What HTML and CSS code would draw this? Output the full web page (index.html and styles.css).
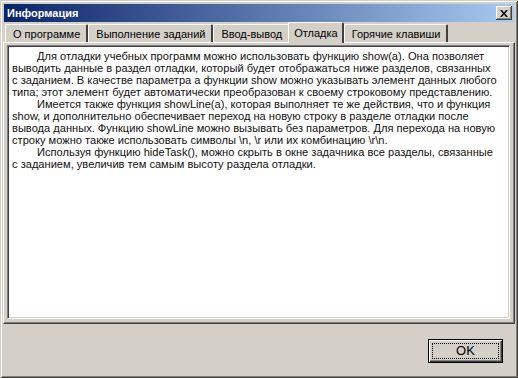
FILE: index.html
```html
<!DOCTYPE html>
<html lang="ru">
<head>
  <meta charset="UTF-8">
  <title>Информация</title>
  <link rel="stylesheet" href="styles.css">
</head>
<body>

  <div class="window">
    <!-- заголовок окна -->
    <div class="titlebar">
      <span class="title">Информация</span>
      <button class="close-btn">
        <svg width="8" height="7" viewBox="0 0 8 7">
          <path d="M0 0h2l2 2.5L6 0h2L5 3.5 8 7H6L4 4.5 2 7H0l3-3.5z" fill="#000"/>
        </svg>
      </button>
    </div>

    <!-- вкладки -->
    <div class="tabs">
      <div class="tab">О программе</div>
      <div class="tab">Выполнение заданий</div>
      <div class="tab">Ввод-вывод</div>
      <div class="tab active">Отладка</div>
      <div class="tab">Горячие клавиши</div>
    </div>

    <div class="tab-page">
      <div class="memo">
        <p class="para">Для отладки учебных программ можно использовать функцию show(a). Она позволяет<br>выводить данные в раздел отладки, который будет отображаться ниже разделов, связанных<br>с заданием. В качестве параметра a функции show можно указывать элемент данных любого<br>типа; этот элемент будет автоматически преобразован к своему строковому представлению.</p>
        <p class="para">Имеется также функция showLine(a), которая выполняет те же действия, что и функция<br>show, и дополнительно обеспечивает переход на новую строку в разделе отладки после<br>вывода данных. Функцию showLine можно вызывать без параметров. Для перехода на новую<br>строку можно также использовать символы \n, \r или их комбинацию \r\n.</p>
        <p class="para">Используя функцию hideTask(), можно скрыть в окне задачника все разделы, связанные<br>с заданием, увеличив тем самым высоту раздела отладки.</p>
      </div>
    </div>

    <div class="footer">
      <button class="ok-btn"><span class="focus">OK</span></button>
    </div>
  </div>

</body>
</html>
```

FILE: styles.css
```css
body {
  margin: 0;
  padding: 0;
  background-color: #d4d0c8;
  font-family: 'Liberation Sans', 'DejaVu Sans', sans-serif;
  font-size: 11px;
  color: #000;
}

.window {
  width: 518px;
  height: 378px;
  box-sizing: border-box;
  background-color: #d4d0c8;
  padding: 4px 4px 4px 4px;
  box-shadow: inset 1px 1px 0 #d4d0c8, inset -1px -1px 0 #404040,
              inset 2px 2px 0 #ffffff, inset -2px -2px 0 #808080;
  display: flex;
  flex-direction: column;
}

/* заголовок */
.titlebar {
  height: 18px;
  background: linear-gradient(to right, #0a246a, #a6caf0);
  display: flex;
  align-items: center;
  justify-content: space-between;
  padding: 0 2px 0 2px;
}

.title {
  color: #fff;
  font-weight: bold;
  font-size: 11px;
  padding-left: 1px;
}

.close-btn {
  width: 16px;
  height: 14px;
  padding: 0;
  border: none;
  background-color: #d4d0c8;
  display: flex;
  align-items: center;
  justify-content: center;
  box-shadow: inset -1px -1px 0 #404040, inset 1px 1px 0 #ffffff,
              inset -2px -2px 0 #808080;
}

/* вкладки */
.tabs {
  display: flex;
  height: 20px;
  align-items: flex-end;
  padding-left: 1px;
  position: relative;
  z-index: 1;
}

.tab {
  height: 18px;
  box-sizing: border-box;
  padding: 2px 6px 0 7px;
  margin-right: 0;
  border-top: 1px solid #fff;
  border-left: 1px solid #fff;
  border-right: 2px solid #404040;
  border-radius: 2px 2px 0 0;
  white-space: nowrap;
  line-height: 14px;
}

.tab.active {
  height: 21px;
  margin: 0 -2px -1px -2px;
  padding: 3px 4px 0 5px;
  background-color: #d4d0c8;
  position: relative;
}

.tab.active + .tab {
  margin-left: 2px;
}

.tab-page {
  height: 282px;
  box-sizing: border-box;
  border-top: 1px solid #fff;
  border-left: 1px solid #fff;
  border-right: 1px solid #404040;
  border-bottom: 1px solid #404040;
  box-shadow: inset -1px -1px 0 #808080;
  padding: 2px 4px 4px 3px;
  margin-left: -1px;
  margin-right: -1px;
}

.memo {
  height: 100%;
  box-sizing: border-box;
  background-color: #fff;
  border-top: 1px solid #808080;
  border-left: 1px solid #808080;
  border-right: 1px solid #fff;
  border-bottom: 1px solid #fff;
  box-shadow: inset 1px 1px 0 #404040, inset -1px -1px 0 #d4d0c8;
  padding: 4px 4px;
  color: #111;
}

.para {
  margin: 0;
  font-size: 11.1px;
  line-height: 12px;
  white-space: nowrap;
  text-indent: 25px;
}

/* кнопка OK */
.footer {
  flex: 1;
  display: flex;
  justify-content: flex-end;
  align-items: flex-start;
  padding: 15px 11px 0 0;
}

.ok-btn {
  width: 75px;
  height: 24px;
  padding: 3px;
  border: 1px solid #000;
  background-color: #d4d0c8;
  font-family: inherit;
  font-size: 13px;
  box-shadow: inset 1px 1px 0 #fff, inset -1px -1px 0 #404040,
              inset -2px -2px 0 #808080;
}

.focus {
  display: block;
  height: 100%;
  box-sizing: border-box;
  border: 1px dotted #000;
  line-height: 14px;
}
```
